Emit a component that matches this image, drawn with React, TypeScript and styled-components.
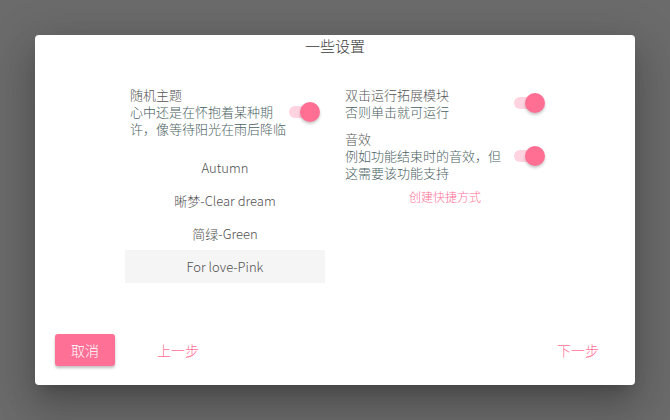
import styled, { createGlobalStyle } from 'styled-components';

const GlobalStyle = createGlobalStyle`
  html, body {
    margin: 0;
    padding: 0;
    background: #6b6b6b;
    font-family: 'Noto Sans CJK SC', 'Noto Sans', sans-serif;
    font-weight: 300;
  }
`;

const Page = styled.div`
  width: 670px;
  height: 420px;
  display: flex;
  align-items: center;
  justify-content: center;
`;

const Dialog = styled.div`
  width: 600px;
  height: 350px;
  background: #ffffff;
  border-radius: 4px;
  box-shadow: 0 11px 15px -7px rgba(0, 0, 0, 0.2),
    0 24px 38px 3px rgba(0, 0, 0, 0.14), 0 9px 46px 8px rgba(0, 0, 0, 0.12);
  display: flex;
  flex-direction: column;
`;

const Title = styled.div`
  margin-top: 1px;
  height: 20px;
  line-height: 20px;
  text-align: center;
  font-size: 15px;
  color: #3a3a3a;
`;

const Body = styled.div`
  flex: 1;
  display: grid;
  grid-template-columns: 200px 210px;
  column-gap: 15px;
  align-items: start;
  padding: 30px 0 0 90px;
`;

const Column = styled.div`
  display: flex;
  flex-direction: column;
`;

const SettingRow = styled.div<{ $gap?: number }>`
  display: flex;
  align-items: center;
  justify-content: space-between;
  padding: 0 5px;
  margin-top: ${(p) => p.$gap ?? 0}px;
`;

const SettingText = styled.div<{ $width: number }>`
  width: ${(p) => p.$width}px;
  font-size: 13px;
  line-height: 17px;
`;

const SettingLabel = styled.div`
  color: #555555;
`;

const SettingDesc = styled.div`
  color: #4a6262;
`;

const SwitchBox = styled.div`
  position: relative;
  width: 30px;
  height: 20px;
  flex-shrink: 0;
`;

const SwitchTrack = styled.div`
  position: absolute;
  left: -1px;
  top: 4px;
  width: 28px;
  height: 12px;
  border-radius: 6px;
  background: #ffd3df;
`;

const SwitchKnob = styled.div`
  position: absolute;
  right: 0;
  top: 0;
  width: 20px;
  height: 20px;
  border-radius: 50%;
  background: #ff6f93;
  box-shadow: 0 2px 3px rgba(0, 0, 0, 0.22);
`;

const ThemeList = styled.div`
  margin-top: 14px;
  display: flex;
  flex-direction: column;
`;

const ThemeItem = styled.div<{ $active?: boolean }>`
  height: 33px;
  line-height: 33px;
  text-align: center;
  font-size: 13px;
  color: #505050;
  background: ${(p) => (p.$active ? '#f5f5f5' : 'transparent')};
`;

const LinkText = styled.div`
  margin-top: 7px;
  text-align: center;
  font-size: 12px;
  line-height: 17px;
  color: #ff7096;
`;

const Footer = styled.div`
  display: flex;
  align-items: center;
  padding: 0 13px 19px 20px;
`;

const CancelButton = styled.button`
  width: 60px;
  height: 32px;
  border: none;
  border-radius: 3px;
  background: #ff7096;
  color: #ffffff;
  font-family: inherit;
  font-weight: inherit;
  font-size: 14px;
  box-shadow: 0 2px 3px rgba(0, 0, 0, 0.25);
  padding: 0;
`;

const FlatButton = styled.button<{ $push?: boolean }>`
  width: 88px;
  height: 32px;
  border: none;
  background: transparent;
  color: #ff7096;
  font-family: inherit;
  font-weight: inherit;
  font-size: 14px;
  padding: 0;
  margin-left: ${(p) => (p.$push ? 'auto' : '19px')};
`;

const Switch = () => (
  <SwitchBox>
    <SwitchTrack />
    <SwitchKnob />
  </SwitchBox>
);

const themes = ['Autumn', '晰梦-Clear dream', '简绿-Green', 'For love-Pink'];

export default function App() {
  return (
    <>
      <GlobalStyle />
      <Page>
        <Dialog>
          <Title>一些设置</Title>
          <Body>
            <Column>
              <SettingRow>
                <SettingText $width={160}>
                  <SettingLabel>随机主题</SettingLabel>
                  <SettingDesc>心中还是在怀抱着某种期许，像等待阳光在雨后降临</SettingDesc>
                </SettingText>
                <Switch />
              </SettingRow>
              <ThemeList>
                {themes.map((t, i) => (
                  <ThemeItem key={t} $active={i === themes.length - 1}>
                    {t}
                  </ThemeItem>
                ))}
              </ThemeList>
            </Column>
            <Column>
              <SettingRow>
                <SettingText $width={164}>
                  <SettingLabel>双击运行拓展模块</SettingLabel>
                  <SettingDesc>否则单击就可运行</SettingDesc>
                </SettingText>
                <Switch />
              </SettingRow>
              <SettingRow $gap={10}>
                <SettingText $width={164}>
                  <SettingLabel>音效</SettingLabel>
                  <SettingDesc>例如功能结束时的音效，但这需要该功能支持</SettingDesc>
                </SettingText>
                <Switch />
              </SettingRow>
              <LinkText>创建快捷方式</LinkText>
            </Column>
          </Body>
          <Footer>
            <CancelButton>取消</CancelButton>
            <FlatButton>上一步</FlatButton>
            <FlatButton $push>下一步</FlatButton>
          </Footer>
        </Dialog>
      </Page>
    </>
  );
}
